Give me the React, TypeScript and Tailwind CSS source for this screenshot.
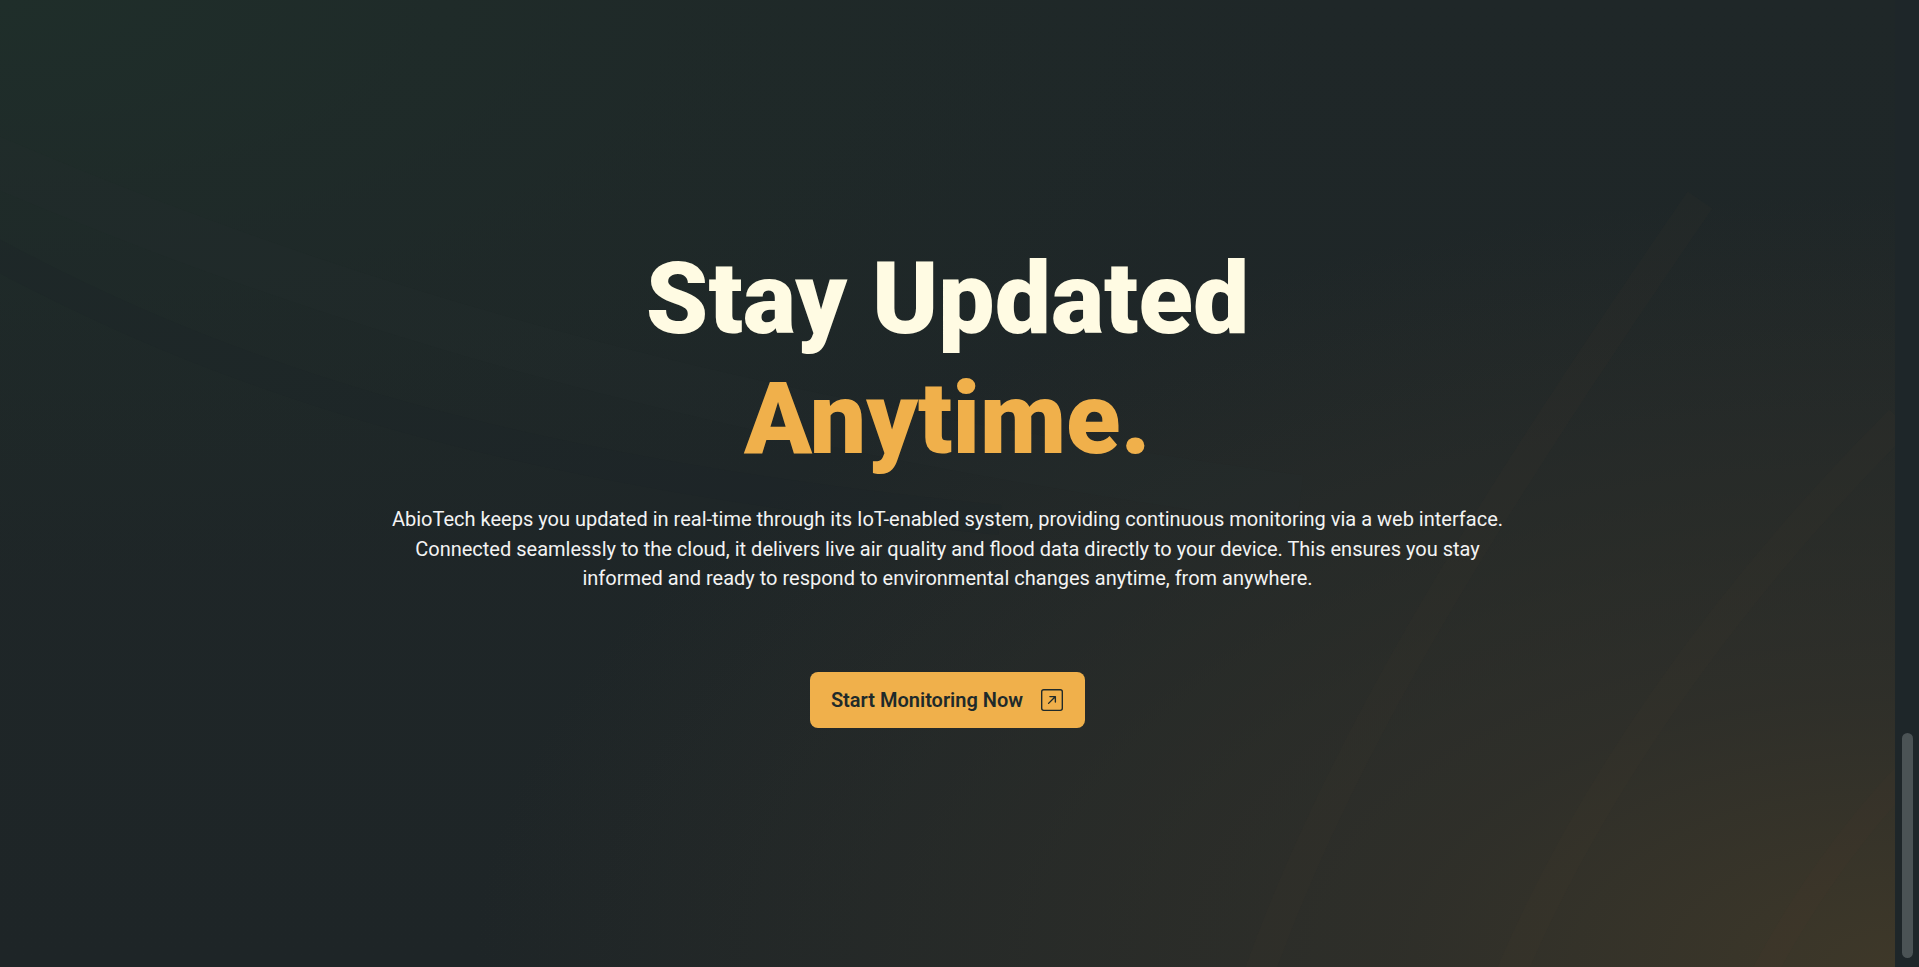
import React from "react";
import { BsArrowUpRightSquare } from "react-icons/bs";

export default function App() {
  return (
    <div className="flex h-[967px] w-full overflow-hidden font-['Roboto',_'Noto_Sans',sans-serif]">
      <main className="relative flex flex-1 flex-col items-center justify-center overflow-hidden bg-[image:radial-gradient(ellipse_75%_80%_at_100%_100%,#3e3829_0%,rgba(52,50,42,0.75)_35%,rgba(31,38,40,0)_100%),radial-gradient(ellipse_70%_60%_at_0%_0%,#1f2e2a_0%,rgba(31,44,41,0.5)_50%,rgba(31,38,40,0)_100%),linear-gradient(180deg,#1f2728_0%,#1e2527_100%)]">
        <svg
          className="pointer-events-none absolute inset-0 h-full w-full"
          viewBox="0 0 1895 967"
          preserveAspectRatio="none"
          fill="none"
        >
          <path d="M-100 120 C 300 300, 700 420, 1300 500" stroke="rgba(40,50,50,0.12)" strokeWidth="50" />
          <path d="M-100 200 C 200 380, 500 470, 1000 520" stroke="rgba(28,36,38,0.25)" strokeWidth="30" />
          <path d="M1250 1000 C 1330 760, 1480 520, 1700 200" stroke="rgba(80,62,46,0.08)" strokeWidth="30" />
          <path d="M1500 1000 C 1580 800, 1720 600, 1900 420" stroke="rgba(80,62,46,0.08)" strokeWidth="30" />
          <path d="M1750 1000 C 1800 900, 1860 820, 1920 760" stroke="rgba(80,62,46,0.1)" strokeWidth="25" />
        </svg>
        <h1 className="relative text-center text-[100px] font-black leading-[1.2] text-[#fffbe3]">
          Stay Updated
          <br />
          <span className="text-[#f0b04b]">Anytime.</span>
        </h1>
        <p className="relative mt-[26px] max-w-[1128px] text-center text-[20px] leading-[29.5px] text-[#f3f3f3]">
          AbioTech keeps you updated in real-time through its IoT-enabled system, providing continuous monitoring via a web interface. Connected seamlessly to the cloud, it delivers live air quality and flood data directly to your device. This ensures you stay informed and ready to respond to environmental changes anytime, from anywhere.
        </p>
        <button className="relative mt-[78px] flex h-14 items-center gap-[18px] rounded-lg bg-[#f0b04b] pl-[21px] pr-[22px] text-[20px] font-semibold text-[#1f2a2a]">
          Start Monitoring Now
          <BsArrowUpRightSquare size={22} />
        </button>
      </main>
      <div className="flex w-6 flex-col justify-end bg-[#1e2629] pb-[9px] pl-[7px] pr-[6px]">
        <div className="h-[225px] rounded-full bg-[#4b5355]" />
      </div>
    </div>
  );
}
